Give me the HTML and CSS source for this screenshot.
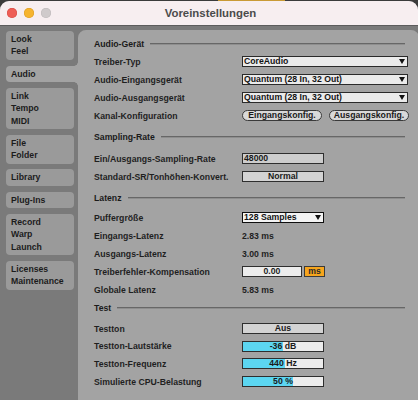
FILE: index.html
```html
<!DOCTYPE html>
<html lang="de">
<head>
<meta charset="utf-8">
<title>Voreinstellungen</title>
<link rel="stylesheet" href="styles.css">
</head>
<body>
<div class="window">
  <header class="titlebar">
    <div class="lights"><span class="light red"></span><span class="light yellow"></span><span class="light grey"></span></div>
    <div class="title">Voreinstellungen</div>
  </header>
  <div class="main">
    <nav class="sidebar">
      <div class="tab">Look<br>Feel</div>
      <div class="tab active">Audio</div>
      <div class="tab">Link<br>Tempo<br>MIDI</div>
      <div class="tab">File<br>Folder</div>
      <div class="tab">Library</div>
      <div class="tab">Plug-Ins</div>
      <div class="tab">Record<br>Warp<br>Launch</div>
      <div class="tab">Licenses<br>Maintenance</div>
    </nav>
    <main class="panel">
      <section class="group g-device">
        <div class="section-head"><span>Audio-Gerät</span><i class="rule"></i></div>
        <div class="row"><span class="label">Treiber-Typ</span>
          <div class="select wide"><span>CoreAudio</span><svg class="arrow" width="6" height="5" viewBox="0 0 6 5"><polygon points="0,0 6,0 3,5" fill="#111"/></svg></div></div>
        <div class="row"><span class="label">Audio-Eingangsgerät</span>
          <div class="select wide"><span>Quantum (28 In, 32 Out)</span><svg class="arrow" width="6" height="5" viewBox="0 0 6 5"><polygon points="0,0 6,0 3,5" fill="#111"/></svg></div></div>
        <div class="row"><span class="label">Audio-Ausgangsgerät</span>
          <div class="select wide"><span>Quantum (28 In, 32 Out)</span><svg class="arrow" width="6" height="5" viewBox="0 0 6 5"><polygon points="0,0 6,0 3,5" fill="#111"/></svg></div></div>
        <div class="row"><span class="label">Kanal-Konfiguration</span>
          <div class="pills"><span class="pill">Eingangskonfig.</span><span class="pill">Ausgangskonfig.</span></div></div>
      </section>

      <section class="group g-rate">
        <div class="section-head"><span>Sampling-Rate</span><i class="rule"></i></div>
        <div class="row"><span class="label">Ein/Ausgangs-Sampling-Rate</span>
          <div class="field">48000</div></div>
        <div class="row"><span class="label">Standard-SR/Tonhöhen-Konvert.</span>
          <div class="button">Normal</div></div>
      </section>

      <section class="group g-latency">
        <div class="section-head"><span>Latenz</span><i class="rule"></i></div>
        <div class="row"><span class="label">Puffergröße</span>
          <div class="select narrow focus"><span>128 Samples</span><svg class="arrow" width="6" height="5" viewBox="0 0 6 5"><polygon points="0,0 6,0 3,5" fill="#111"/></svg></div></div>
        <div class="row"><span class="label">Eingangs-Latenz</span><span class="value">2.83 ms</span></div>
        <div class="row"><span class="label">Ausgangs-Latenz</span><span class="value">3.00 ms</span></div>
        <div class="row"><span class="label">Treiberfehler-Kompensation</span>
          <div class="numgroup"><span class="num">0.00</span><span class="unit">ms</span></div></div>
        <div class="row"><span class="label">Globale Latenz</span><span class="value">5.83 ms</span></div>
      </section>

      <section class="group g-test">
        <div class="section-head"><span>Test</span><i class="rule"></i></div>
        <div class="row"><span class="label">Testton</span>
          <div class="button">Aus</div></div>
        <div class="row"><span class="label">Testton-Lautstärke</span>
          <div class="slider"><span class="fill" style="width:50%"></span><span class="stext">-36 dB</span></div></div>
        <div class="row"><span class="label">Testton-Frequenz</span>
          <div class="slider"><span class="fill" style="width:53%"></span><span class="stext">440 Hz</span></div></div>
        <div class="row"><span class="label">Simulierte CPU-Belastung</span>
          <div class="slider"><span class="fill" style="width:63%"></span><span class="stext">50 %</span></div></div>
      </section>
    </main>
  </div>
</div>
</body>
</html>
```

FILE: styles.css
```css
* { box-sizing: border-box; }
html, body { margin: 0; padding: 0; }
body {
  width: 418px;
  height: 400px;
  overflow: hidden;
  background: linear-gradient(to right, #3b3b3b 218px, #c99a35 218px, #c99a35 285px, #3b3b3b 285px);
  font-family: "Liberation Sans", Arial, sans-serif;
  color: #1e1e1e;
}
.window {
  margin-top: 1px;
  height: 399px;
  display: flex;
  flex-direction: column;
  background: #7a7a7a;
  border-radius: 9px 9px 0 0;
  overflow: hidden;
}
.titlebar {
  height: 25px;
  flex: none;
  background: #f7eef0;
  border-bottom: 1px solid #5c5c5c;
  display: grid;
  grid-template-columns: 1fr auto 1fr;
  align-items: center;
}
.lights { display: flex; gap: 7px; padding-left: 7px; }
.light { width: 10px; height: 10px; border-radius: 50%; }
.red { background: #ee5d55; box-shadow: inset 0 0 0 0.5px #d54a43; }
.yellow { background: #f6b42e; box-shadow: inset 0 0 0 0.5px #d99a22; }
.grey { background: #cfcacb; box-shadow: inset 0 0 0 0.5px #bdb8b9; }
.title { font-weight: bold; font-size: 11.4px; color: #4b4b4b; padding-left: 3px; }

.main { flex: 1; display: flex; min-height: 0; }
.sidebar {
  width: 78px;
  flex: none;
  padding: 5px 4px 0 6px;
  display: flex;
  flex-direction: column;
  gap: 5.8px;
  position: relative;
  z-index: 1;
}
.tab {
  background: #9a9a9a;
  border-radius: 4px;
  padding: 2px 4px 2px 5px;
  font-size: 8.7px;
  font-weight: bold;
  line-height: 12.4px;
  color: #1c1c1c;
}
.tab.active {
  background: #a3a3a3;
  border-radius: 4px 0 0 4px;
  margin-right: -4px;
  position: relative;
}
.tab.active::before,
.tab.active::after {
  content: "";
  position: absolute;
  right: 0;
  width: 4px;
  height: 4px;
}
.tab.active::before { top: -4px; background: radial-gradient(circle at 0 0, transparent 3.5px, #a3a3a3 4px); }
.tab.active::after { bottom: -4px; background: radial-gradient(circle at 0 100%, transparent 3.5px, #a3a3a3 4px); }

.panel {
  flex: 1;
  display: block;
  background: #a3a3a3;
  border-radius: 8px 8px 0 0;
  margin-top: 3.5px;
  padding: 5.2px 10px 0 16px;
  font-size: 8.7px;
  font-weight: bold;
}
.section-head {
  height: 18px;
  display: flex;
  align-items: center;
  gap: 6px;
  color: #1a1a1a;
}
.g-device .section-head { margin: 0 0 0.3px; }
.g-rate .section-head { margin: 3px 0 4px; }
.g-latency .section-head { margin: 3.3px 0 1.4px; }
.g-test .section-head { margin: 0.6px 0 2.7px; }
.rule {
  flex: 1;
  height: 2px;
  margin-right: 4px;
  border-top: 1px solid #676767;
  border-bottom: 1px solid #8e8e8e;
}
.row {
  height: 18px;
  display: grid;
  grid-template-columns: 148px 1fr;
  align-items: center;
}
.g-test .row { height: 17.6px; }
.label { color: #1f1f1f; white-space: nowrap; }
.value { color: #1f1f1f; }

.select {
  display: flex;
  align-items: center;
  justify-content: space-between;
  height: 11px;
  background: #ebebeb;
  border: 1px solid #2a2a2a;
  padding: 0 2px 0 1px;
  line-height: 9px;
  color: #141414;
}
.wide { width: 166px; }
.narrow { width: 82px; }
.select.focus { border: 1.5px solid #0e0e0e; background: #f3f3f3; }
.arrow { display: block; flex: none; }

.pills { display: flex; gap: 7px; }
.pill {
  width: 80px;
  height: 11px;
  border: 1px solid #3a3a3a;
  border-radius: 6px;
  background: #d9d9d9;
  text-align: center;
  line-height: 9px;
  color: #1a1a1a;
}
.field {
  width: 82px;
  height: 11px;
  border: 1px solid #2e2e2e;
  background: #cdcdcd;
  line-height: 9px;
  padding-left: 1px;
  color: #1a1a1a;
}
.button {
  width: 82px;
  height: 11px;
  border: 1px solid #2e2e2e;
  background: #d3d3d3;
  line-height: 9px;
  text-align: center;
  color: #1a1a1a;
}
.numgroup { display: flex; gap: 2px; }
.num {
  width: 60px;
  height: 11px;
  border: 1px solid #2e2e2e;
  background: #ececec;
  text-align: center;
  line-height: 9px;
}
.unit {
  width: 21px;
  height: 11px;
  border: 1px solid #3a3a3a;
  background: #f6a51d;
  text-align: center;
  line-height: 9px;
  color: #2a2a2a;
}
.slider {
  width: 82px;
  height: 11px;
  border: 1px solid #2e2e2e;
  background: #ececec;
  display: grid;
  line-height: 9px;
}
.slider > * { grid-area: 1 / 1; }
.fill { background: #5cd6f1; height: 9px; }
.stext { justify-self: center; color: #1a1a1a; }
```
